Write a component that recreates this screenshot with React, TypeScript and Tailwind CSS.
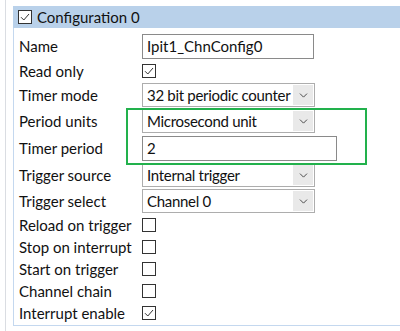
import { ChevronDown } from "lucide-react";

function Check({ checked }: { checked?: boolean }) {
  return (
    <div className="w-[14px] h-[14px] border border-[#333333] bg-white flex items-center justify-center">
      {checked && (
        <svg width="10" height="8" viewBox="0 0 10 8" fill="none">
          <path d="M1 4.2 L3.8 7 L9 1" stroke="#333333" strokeWidth="1" />
        </svg>
      )}
    </div>
  );
}

function Select({ value, w = "w-[173px]" }: { value: string; w?: string }) {
  return (
    <div className={`${w} h-[24px] border border-[#adadad] bg-white flex items-center pl-[4px] pr-[1px]`}>
      <span className="flex-1 whitespace-nowrap tracking-[-0.3px]">{value}</span>
      <div className="w-[20px] h-[20px] shrink-0 ml-[2px] bg-[#e9e9e9] flex items-center justify-center">
        <ChevronDown size={13} strokeWidth={1.75} className="text-[#444]" />
      </div>
    </div>
  );
}

function Input({ value, w }: { value: string; w: string }) {
  return (
    <div className={`${w} h-[25px] border border-[#8a8a8a] bg-white flex items-center px-[4px] whitespace-nowrap`}>
      {value}
    </div>
  );
}

export default function App() {
  const rows: { label: string; h: string; control: React.ReactNode }[] = [
    { label: "Name", h: "h-[27px]", control: <Input value="Ipit1_ChnConfig0" w="w-[172px]" /> },
    { label: "Read only", h: "h-[22px]", control: <Check checked /> },
    { label: "Timer mode", h: "h-[26px]", control: <Select value="32 bit periodic counter" /> },
    { label: "Period units", h: "h-[26px]", control: <Select value="Microsecond unit" /> },
    { label: "Timer period", h: "h-[28px]", control: <Input value="2" w="w-[195px]" /> },
    { label: "Trigger source", h: "h-[26px]", control: <Select value="Internal trigger" /> },
    { label: "Trigger select", h: "h-[26px]", control: <Select value="Channel 0" /> },
    { label: "Reload on trigger", h: "h-[22px]", control: <Check /> },
    { label: "Stop on interrupt", h: "h-[22px]", control: <Check /> },
    { label: "Start on trigger", h: "h-[22px]", control: <Check /> },
    { label: "Channel chain", h: "h-[22px]", control: <Check /> },
    { label: "Interrupt enable", h: "h-[22px]", control: <Check checked /> },
  ];

  return (
    <div
      className="w-[400px] h-[331px] bg-white overflow-hidden flex text-[15px] text-[#111] leading-none"
      style={{ fontFamily: 'Lato, "Open Sans", sans-serif' }}
    >
      <div className="w-[5px] shrink-0" />
      <div className="w-px shrink-0 bg-[#dadde2]" />
      <div className="w-[7px] shrink-0" />
      <div className="flex-1 flex flex-col pt-[6px]">
        <div className="h-[22px] bg-[#b9d1ea] flex items-center pl-[5px] gap-[5px]">
          <Check checked />
          <span>Configuration 0</span>
        </div>
        <div className="relative border-l border-b border-[#c4d8ef] w-[387px] h-[298px] pt-[5px] pl-[5px]">
          {rows.map((r) => (
            <div key={r.label} className={`flex items-center ${r.h}`}>
              <div className="w-[123px] shrink-0 whitespace-nowrap">{r.label}</div>
              {r.control}
            </div>
          ))}
          <div className="absolute left-[112px] top-[80px] w-[241px] h-[57px] border-2 border-[#22b14c]" />
        </div>
      </div>
    </div>
  );
}
